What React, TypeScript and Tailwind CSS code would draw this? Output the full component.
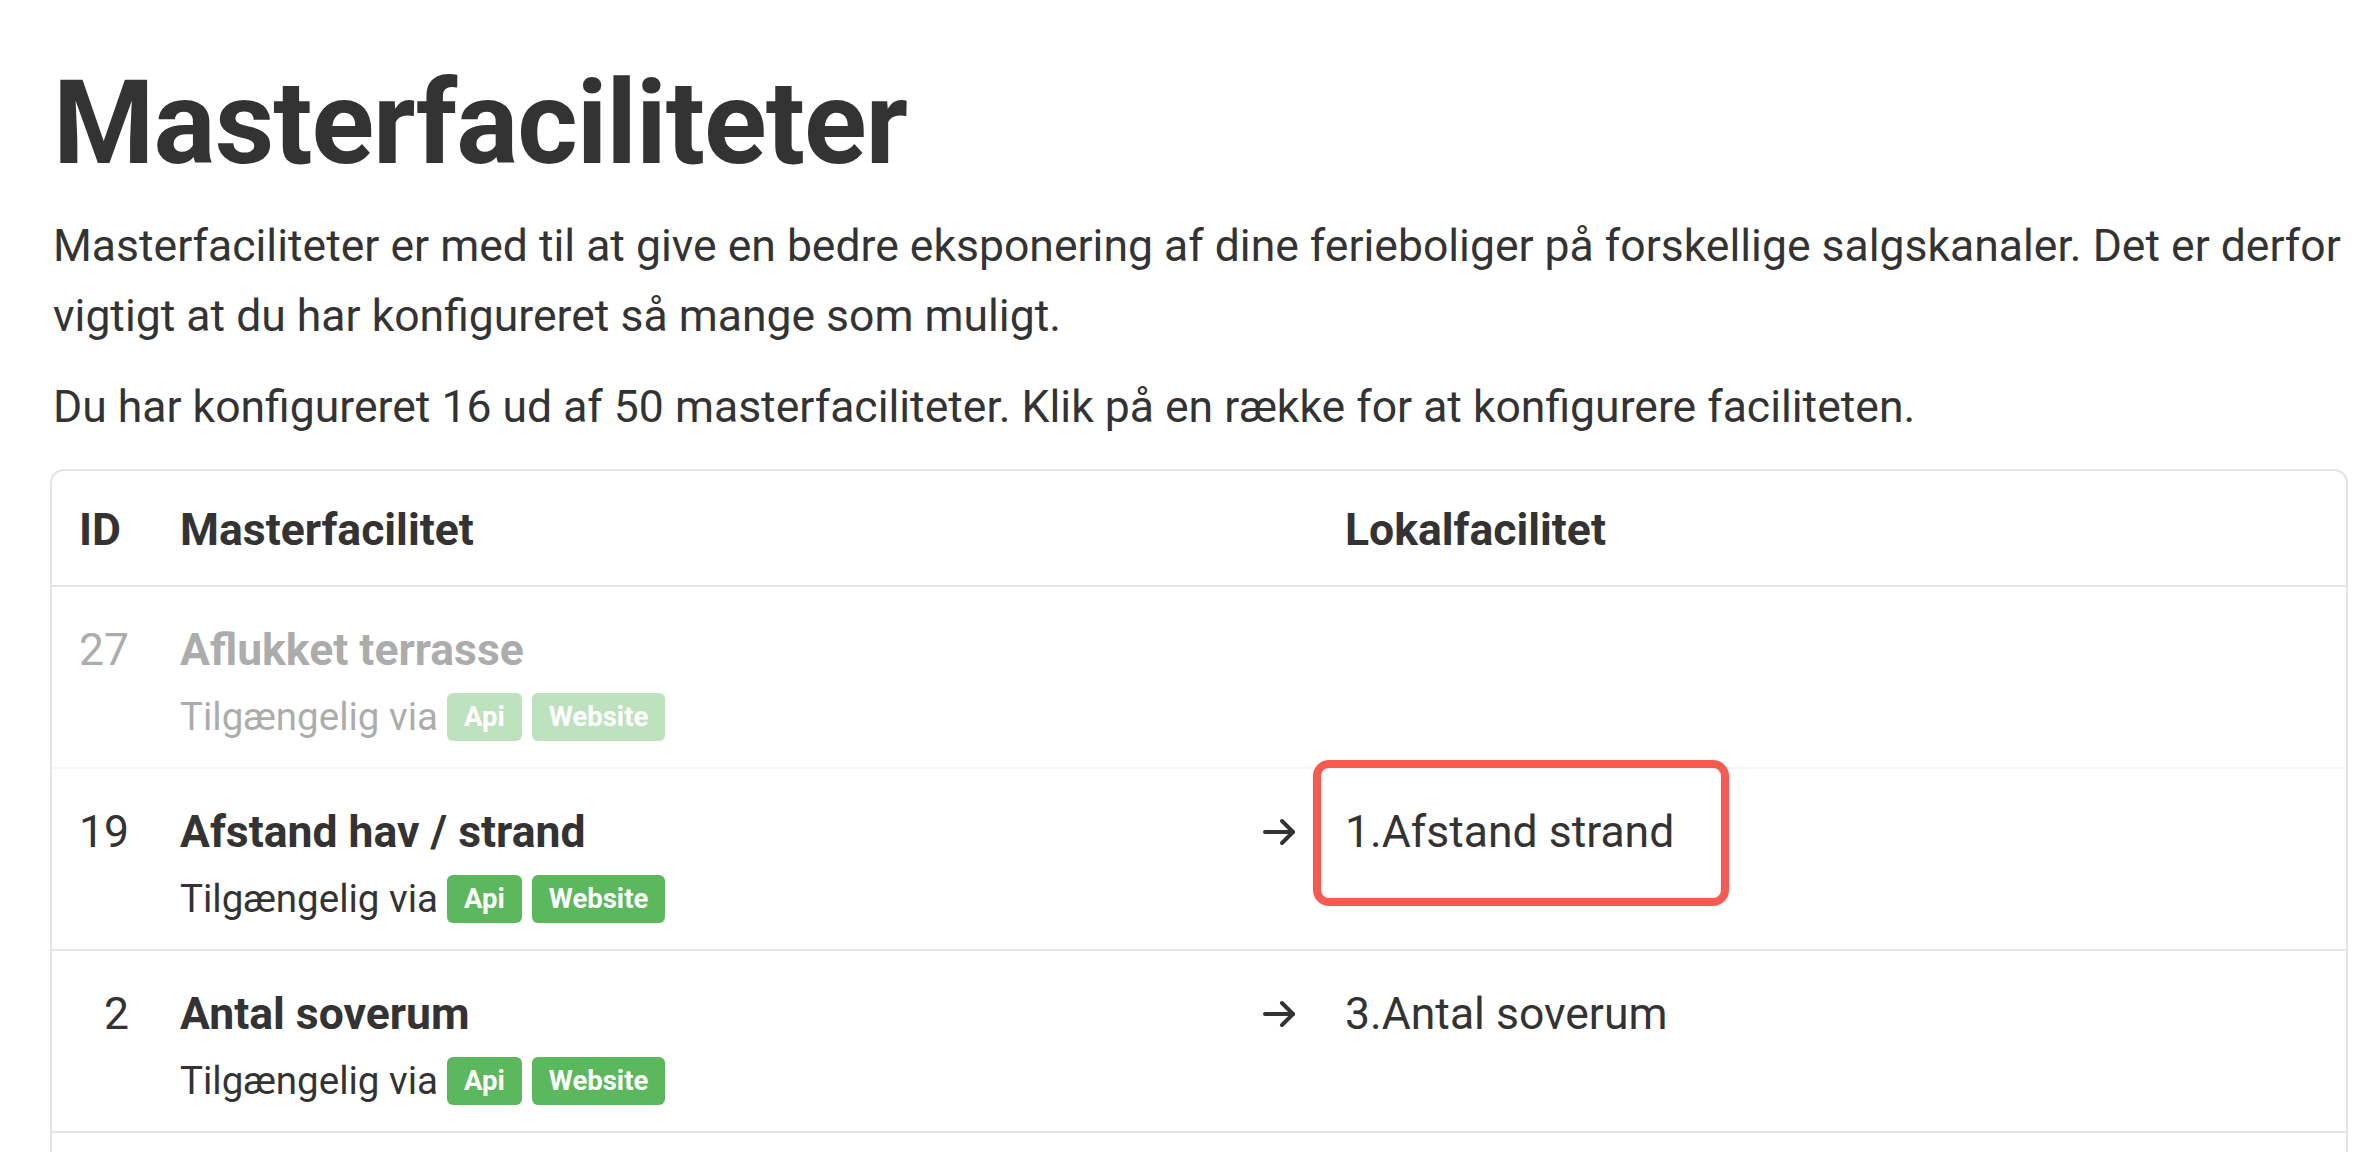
import React from "react";

const FONT = { fontFamily: "Roboto, 'Liberation Sans', Arial, sans-serif" };

function Arrow() {
  return (
    <svg width="35" height="30" viewBox="0 0 35 30" fill="none">
      <path d="M3 15 H31" stroke="#333" strokeWidth="4" strokeLinecap="round" />
      <path d="M20 4 L31 15 L20 26" stroke="#333" strokeWidth="4" strokeLinecap="round" strokeLinejoin="round" />
    </svg>
  );
}

function Badge({ children }: { children: React.ReactNode }) {
  return (
    <span className="inline-flex h-[48px] items-center rounded-[6px] bg-[#5cb85c] px-[17px] text-[27.5px] font-bold text-white">
      {children}
    </span>
  );
}

type Row = { id: number; name: string; local?: string; faded?: boolean; highlight?: boolean };

const rows: Row[] = [
  { id: 27, name: "Aflukket terrasse", faded: true },
  { id: 19, name: "Afstand hav / strand", local: "1.Afstand strand", highlight: true },
  { id: 2, name: "Antal soverum", local: "3.Antal soverum" },
];

export default function App() {
  return (
    <div className="h-[1152px] w-[2378px] overflow-hidden bg-white text-[#333]" style={FONT}>
      <div className="pl-[50px] pr-[30px]">
        <h1 className="ml-[3px] mt-[65px] text-[116px] font-bold leading-[116px] tracking-[-1px]">Masterfaciliteter</h1>
        <p className="ml-[3px] mt-[30px] whitespace-nowrap text-[44.5px] leading-[70px]">
          Masterfaciliteter er med til at give en bedre eksponering af dine ferieboliger på forskellige salgskanaler. Det er derfor
          <br />
          vigtigt at du har konfigureret så mange som muligt.
        </p>
        <p className="ml-[3px] mt-[21px] whitespace-nowrap text-[44.5px] leading-[70px]">
          Du har konfigureret 16 ud af 50 masterfaciliteter. Klik på en række for at konfigurere faciliteten.
        </p>
        <div className="mt-[27px] h-[800px] rounded-[14px] border-2 border-[#e4e4e4]">
          <div className="flex border-b-2 border-[#e4e4e4] pb-[30px] pl-[27px] pt-[34px] text-[44.5px] font-bold leading-[50px]">
            <div className="w-[50px]">ID</div>
            <div className="ml-[51px] w-[1082px]">Masterfacilitet</div>
            <div className="ml-[83px]">Lokalfacilitet</div>
          </div>
          {rows.map((r) => (
            <div
              key={r.id}
              className={"relative flex border-b-2 border-[#e6e6e6] pb-[26px] pl-[27px] pt-[38px] " + (r.faded ? "opacity-40" : "")}
            >
              <div className="w-[50px] text-right text-[44.5px] leading-[50px]">{r.id}</div>
              <div className="ml-[51px] w-[1082px]">
                <div className="text-[44.5px] font-bold leading-[50px]">{r.name}</div>
                <div className="mt-[18px] flex h-[48px] items-center gap-[10px]">
                  <span className="mr-[-1px] text-[38.5px] leading-[48px]">Tilgængelig via</span>
                  <Badge>Api</Badge>
                  <Badge>Website</Badge>
                </div>
              </div>
              {r.local ? (
                <>
                  <div className="flex h-[50px] w-[35px] items-center">
                    <Arrow />
                  </div>
                  <div className="ml-[48px] text-[44.5px] leading-[50px]">{r.local}</div>
                </>
              ) : null}
              {r.highlight ? (
                <div className="absolute left-[1261px] top-[-9px] h-[146px] w-[416px] rounded-[16px] border-[8px] border-[#f95a4f]" />
              ) : null}
            </div>
          ))}
          <div className="h-[182px]" />
        </div>
      </div>
    </div>
  );
}
